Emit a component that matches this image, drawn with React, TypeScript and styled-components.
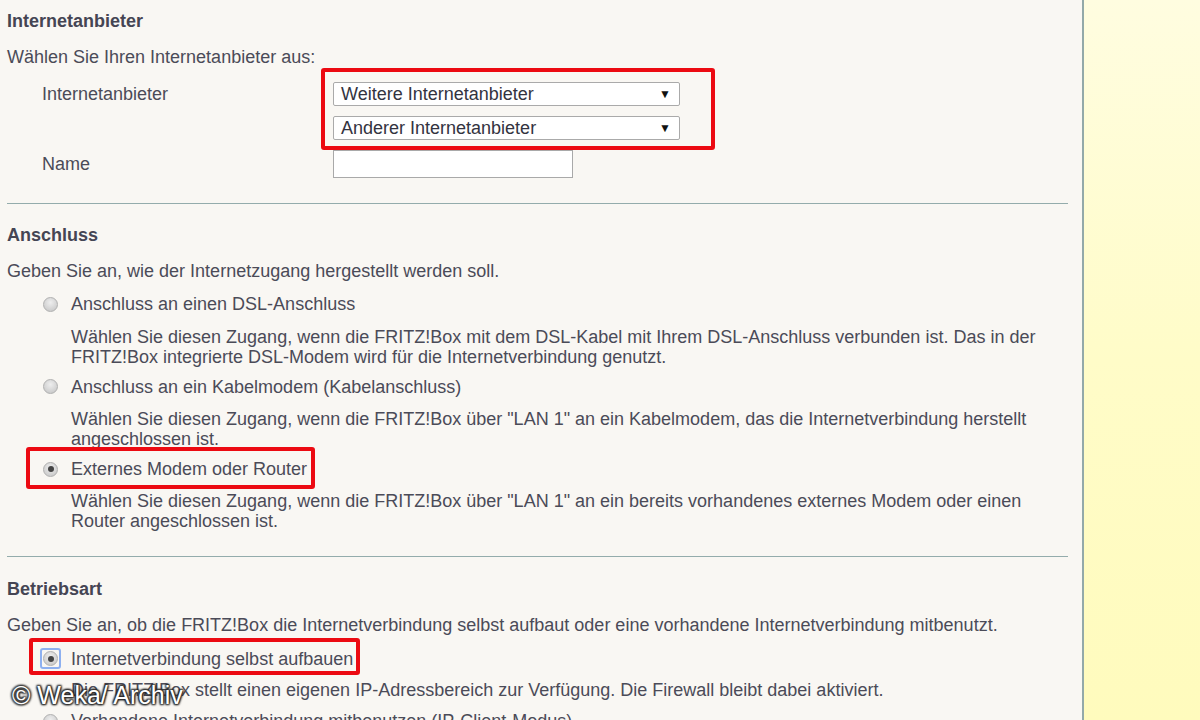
import React from "react";
import styled, { createGlobalStyle, css } from "styled-components";

const Global = createGlobalStyle`
  html, body { margin: 0; padding: 0; }
  body {
    font-family: "Liberation Sans", Arial, sans-serif;
    background: #f9f7f3;
    overflow: hidden;
  }
`;

const Page = styled.div`
  display: flex;
  width: 1200px;
  height: 720px;
  overflow: hidden;
  position: relative;
`;

const Main = styled.main`
  width: 1084px;
  flex: none;
  box-sizing: border-box;
  background: #f9f7f3;
  border-right: 2px solid #93a9a9;
  padding-left: 7px;
  color: #4b4b58;
  font-size: 18px;
  line-height: 20px;
`;

const Side = styled.aside`
  flex: 1;
  background: linear-gradient(180deg, #fffde0 0%, #fffcc8 50%, #fffbbd 100%);
`;

const Section = styled.section<{ $top: number; $bottom: number; $last?: boolean }>`
  margin-right: 14px;
  padding-top: ${(p) => p.$top}px;
  padding-bottom: ${(p) => p.$bottom}px;
  ${(p) =>
    !p.$last &&
    css`
      border-bottom: 1px solid #94acac;
    `}
`;

const Heading = styled.h2`
  margin: 0;
  font-size: 18px;
  line-height: 20px;
  font-weight: bold;
  color: #454553;
`;

const Intro = styled.p`
  margin: 16px 0 0;
`;

const FormGrid = styled.div`
  display: grid;
  grid-template-columns: 291px 1fr;
  padding-left: 35px;
  margin-top: 15px;
  row-gap: 10px;
  align-items: center;
`;

const Label = styled.div<{ $top?: boolean }>`
  align-self: ${(p) => (p.$top ? "start" : "center")};
  margin-top: ${(p) => (p.$top ? "2px" : "0")};
`;

const Controls = styled.div`
  position: relative;
  display: flex;
  flex-direction: column;
  gap: 10px;
  width: 347px;
`;

const RedBox = styled.div<{ $t: number; $r: number; $b: number; $l: number }>`
  position: absolute;
  top: ${(p) => p.$t}px;
  right: ${(p) => p.$r}px;
  bottom: ${(p) => p.$b}px;
  left: ${(p) => p.$l}px;
  border: 4px solid #ec0a12;
  border-radius: 3px;
  pointer-events: none;
`;

const Select = styled.div`
  height: 24px;
  box-sizing: border-box;
  background: #fff;
  border: 1px solid #aaaaaa;
  border-radius: 2px;
  display: flex;
  align-items: center;
  justify-content: space-between;
  padding: 0 8px 0 7px;
  color: #333340;
  font-size: 18px;
`;

const Arrow = styled.span`
  font-size: 12px;
  color: #111;
`;

const TextInput = styled.div`
  width: 240px;
  height: 28px;
  box-sizing: border-box;
  background: #fff;
  border: 1px solid #a9a9a9;
`;

const OptionRow = styled.div<{ $mt: number }>`
  margin-top: ${(p) => p.$mt}px;
  padding-left: 36px;
`;

const OptionLine = styled.div`
  position: relative;
  display: inline-flex;
  align-items: center;
  height: 20px;
`;

const Radio = styled.span<{ $checked?: boolean; $focus?: boolean }>`
  position: relative;
  width: 15px;
  height: 15px;
  border-radius: 50%;
  box-sizing: border-box;
  border: 1px solid #b0b0b0;
  background: radial-gradient(circle at 50% 35%, #eeeeee 0%, #d6d6d6 55%, #c2c2c2 100%);
  margin-right: 13px;
  flex: none;
  ${(p) =>
    p.$checked &&
    css`
      &::after {
        content: "";
        position: absolute;
        left: 3.5px;
        top: 3.5px;
        width: 6px;
        height: 6px;
        border-radius: 50%;
        background: #444;
      }
    `}
  ${(p) =>
    p.$focus &&
    css`
      &::before {
        content: "";
        position: absolute;
        left: -4px;
        top: -4px;
        width: 21px;
        height: 21px;
        border: 2px solid #8db0f0;
        border-radius: 3px;
        box-sizing: border-box;
      }
    `}
`;

const Desc = styled.p<{ $mt: number }>`
  margin: ${(p) => p.$mt}px 0 0;
  padding-left: 28px;
  padding-right: 10px;
`;

const Watermark = styled.div`
  position: absolute;
  left: 12px;
  top: 681px;
  font-family: "Liberation Sans", Arial, sans-serif;
  font-size: 25px;
  line-height: 28px;
  color: #fff;
  text-shadow: 0 0 2px #333, 1px 1px 2px #222, -1px -1px 2px #222, 1px -1px 2px #222, -1px 1px 2px #222;
`;

type Opt = {
  label: string;
  desc?: string;
  checked?: boolean;
  focus?: boolean;
  box?: { t: number; r: number; b: number; l: number };
  mt: number;
  dmt?: number;
};

const Option: React.FC<Opt> = ({ label, desc, checked, focus, box, mt, dmt = 11 }) => (
  <OptionRow $mt={mt}>
    <OptionLine>
      <Radio $checked={checked} $focus={focus} />
      <span>{label}</span>
      {box && <RedBox $t={box.t} $r={box.r} $b={box.b} $l={box.l} />}
    </OptionLine>
    {desc && <Desc $mt={dmt}>{desc}</Desc>}
  </OptionRow>
);

export default function App() {
  return (
    <>
      <Global />
      <Page>
        <Main>
          <Section $top={11} $bottom={25}>
            <Heading>Internetanbieter</Heading>
            <Intro>Wählen Sie Ihren Internetanbieter aus:</Intro>
            <FormGrid>
              <Label $top>Internetanbieter</Label>
              <Controls>
                <Select>
                  <span>Weitere Internetanbieter</span>
                  <Arrow>▼</Arrow>
                </Select>
                <Select>
                  <span>Anderer Internetanbieter</span>
                  <Arrow>▼</Arrow>
                </Select>
                <RedBox $t={-14} $r={-35} $b={-10} $l={-12} />
              </Controls>
              <Label>Name</Label>
              <TextInput />
            </FormGrid>
          </Section>

          <Section $top={21} $bottom={25}>
            <Heading>Anschluss</Heading>
            <Intro>Geben Sie an, wie der Internetzugang hergestellt werden soll.</Intro>
            <Option
              mt={13}
              label="Anschluss an einen DSL-Anschluss"
              desc="Wählen Sie diesen Zugang, wenn die FRITZ!Box mit dem DSL-Kabel mit Ihrem DSL-Anschluss verbunden ist. Das in der FRITZ!Box integrierte DSL-Modem wird für die Internetverbindung genutzt."
            />
            <Option
              mt={10}
              label="Anschluss an ein Kabelmodem (Kabelanschluss)"
              desc={'Wählen Sie diesen Zugang, wenn die FRITZ!Box über "LAN 1" an ein Kabelmodem, das die Internetverbindung herstellt angeschlossen ist.'}
            />
            <Option
              mt={10}
              dmt={10}
              checked
              label="Externes Modem oder Router"
              box={{ t: -12, r: -8, b: -10, l: -17 }}
              desc={'Wählen Sie diesen Zugang, wenn die FRITZ!Box über "LAN 1" an ein bereits vorhandenes externes Modem oder einen Router angeschlossen ist.'}
            />
          </Section>

          <Section $top={22} $bottom={0} $last>
            <Heading>Betriebsart</Heading>
            <Intro>
              Geben Sie an, ob die FRITZ!Box die Internetverbindung selbst aufbaut oder eine vorhandene
              Internetverbindung mitbenutzt.
            </Intro>
            <Option
              mt={14}
              dmt={10}
              checked
              focus
              label="Internetverbindung selbst aufbauen"
              box={{ t: -11, r: -7, b: -6, l: -14 }}
              desc="Die FRITZ!Box stellt einen eigenen IP-Adressbereich zur Verfügung. Die Firewall bleibt dabei aktiviert."
            />
            <Option mt={11} label="Vorhandene Internetverbindung mitbenutzen (IP-Client-Modus)" />
          </Section>
        </Main>
        <Side />
        <Watermark>© Weka/ Archiv</Watermark>
      </Page>
    </>
  );
}
